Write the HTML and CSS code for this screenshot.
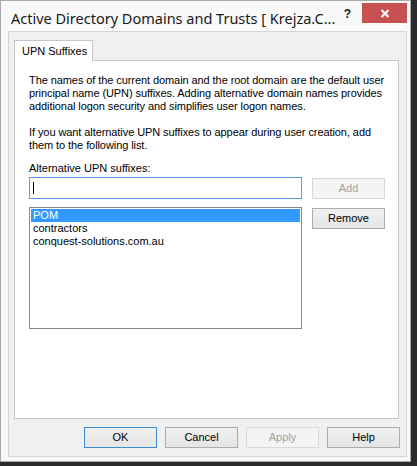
FILE: index.html
```html
<!DOCTYPE html>
<html>
<head>
<meta charset="utf-8">
<link rel="stylesheet" href="styles.css">
</head>
<body>
<div class="window">
  <div class="titlebar">
    <div class="title">Active Directory Domains and Trusts [ Krejza.C...</div>
    <div class="help">?</div>
    <div class="close">
      <svg width="10" height="9" viewBox="0 0 10 9"><path d="M1.5 1 L8.5 8 M8.5 1 L1.5 8" stroke="#fff" stroke-width="2" fill="none"/></svg>
    </div>
  </div>
  <div class="client">
    <div class="tabstrip">
      <div class="tab">UPN Suffixes</div>
      <div class="tab-fill"></div>
    </div>
    <div class="panel">
      <p class="para">The names of the current domain and the root domain are the default user<br>principal name (UPN) suffixes. Adding alternative domain names provides<br>additional logon security and simplifies user logon names.</p>
      <p class="para para2">If you want alternative UPN suffixes to appear during user creation, add<br>them to the following list.</p>
      <div class="label">Alternative UPN suffixes:</div>
      <div class="grid">
        <div class="input"><span class="caret"></span></div>
        <div class="btn disabled">Add</div>
        <div class="listbox">
          <div class="item selected">POM</div>
          <div class="item">contractors</div>
          <div class="item">conquest-solutions.com.au</div>
        </div>
        <div class="btn">Remove</div>
      </div>
    </div>
    <div class="buttons">
      <div class="btn default">OK</div>
      <div class="btn">Cancel</div>
      <div class="btn disabled">Apply</div>
      <div class="btn">Help</div>
    </div>
  </div>
</div>
</body>
</html>
```

FILE: styles.css
```css
html, body {
  margin: 0;
  padding: 0;
}
body {
  background: #2b2b2b;
  width: 417px;
  height: 466px;
  overflow: hidden;
  font-family: "Liberation Sans", Arial, sans-serif;
  font-size: 11px;
  color: #000;
}
.window {
  box-sizing: border-box;
  width: 411px;
  height: 462px;
  border: 1px solid #a9a9a9;
  background: #f9f9f9;
  display: flex;
  flex-direction: column;
}
.titlebar {
  height: 30px;
  display: flex;
  align-items: flex-start;
  flex-shrink: 0;
}
.title {
  font-family: "Noto Sans", "Open Sans", sans-serif;
  font-size: 14.5px;
  line-height: 20px;
  color: #1a1a1a;
  margin-top: 7px;
  margin-left: 10px;
  white-space: nowrap;
  flex: 1;
}
.help {
  font-family: "Liberation Sans", Arial, sans-serif;
  font-weight: bold;
  font-size: 12px;
  line-height: 12px;
  margin-top: 7px;
  margin-right: 11px;
  color: #1a1a1a;
}
.close {
  width: 45px;
  height: 20px;
  margin-top: 2px;
  margin-right: 3px;
  background: #c75050;
  display: flex;
  align-items: center;
  justify-content: center;
}
.close svg {
  display: block;
}
.client {
  box-sizing: border-box;
  width: 399px;
  height: 426px;
  margin-left: 7px;
  border: 1px solid #d4d4d4;
  background: #f0f0f0;
  padding: 8px 7px 0 5px;
  display: flex;
  flex-direction: column;
}
.tabstrip {
  display: flex;
  height: 21px;
}
.tab {
  box-sizing: border-box;
  width: 79px;
  height: 21px;
  border: 1px solid #c6c6c6;
  border-bottom: none;
  background: #fff;
  padding-left: 7px;
  line-height: 20px;
  white-space: nowrap;
}
.tab-fill {
  flex: 1;
  border-bottom: 1px solid #c6c6c6;
}
.panel {
  box-sizing: border-box;
  width: 385px;
  height: 358px;
  background: #fff;
  border: 1px solid #c6c6c6;
  border-top: none;
  padding: 13px 12px 0 14px;
}
.para {
  margin: 0;
  line-height: 13px;
  white-space: nowrap;
  letter-spacing: -0.08px;
}
.para2 {
  margin-top: 13px;
}
.label {
  margin-top: 10px;
  line-height: 13px;
}
.grid {
  margin-top: 2px;
  display: grid;
  grid-template-columns: 273px 73px;
  column-gap: 10px;
  row-gap: 8px;
  align-items: start;
}
.input {
  box-sizing: border-box;
  height: 22px;
  border: 1px solid #569de5;
  background: #fff;
  padding: 4px 0 0 3px;
}
.caret {
  display: block;
  width: 1px;
  height: 12px;
  background: #000;
}
.listbox {
  box-sizing: border-box;
  height: 122px;
  border: 1px solid #828790;
  background: #fff;
  padding: 1px;
}
.item {
  height: 13px;
  line-height: 13px;
  padding-left: 2px;
  white-space: nowrap;
}
.item.selected {
  background: #3399ff;
  color: #fff;
}
.btn {
  box-sizing: border-box;
  width: 73px;
  height: 21px;
  border: 1px solid #acacac;
  background: linear-gradient(#f0f0f0, #e5e5e5);
  text-align: center;
  line-height: 19px;
  color: #000;
}
.grid .btn {
  margin-top: 1px;
}
.btn.disabled {
  border-color: #d9d9d9;
  background: #f4f4f4;
  color: #a0a0a0;
}
.btn.default {
  border-color: #3c8ad8;
}
.buttons {
  margin-top: 8px;
  display: flex;
  justify-content: flex-end;
  gap: 8px;
  padding-right: 1px;
  margin-right: -2px;
}
```
